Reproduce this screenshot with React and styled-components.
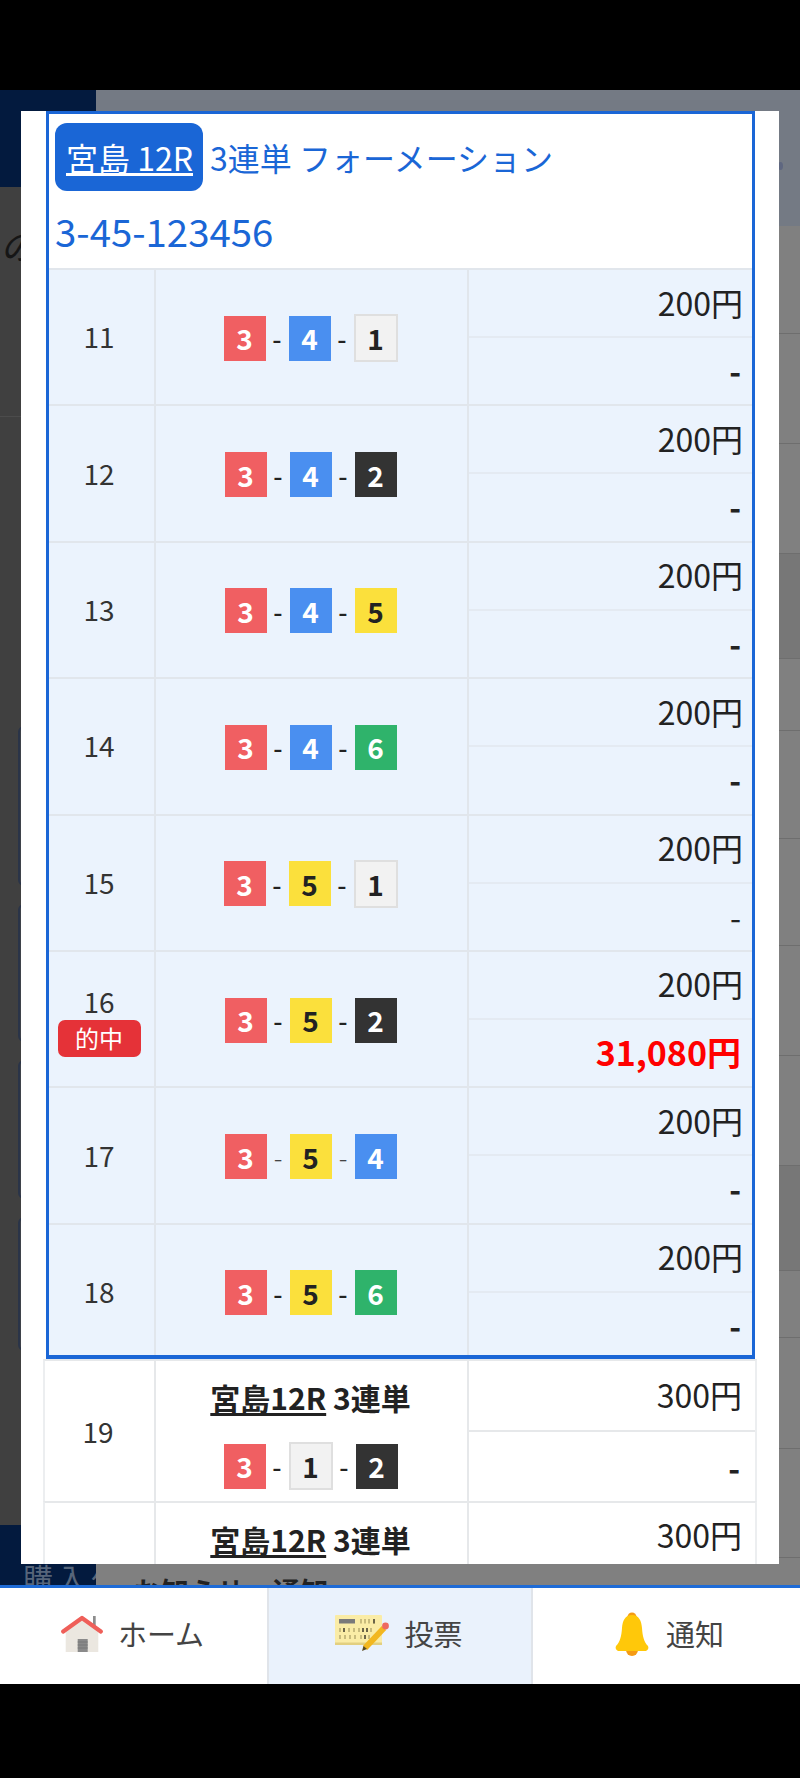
import React from 'react'
import styled, { createGlobalStyle } from 'styled-components'

const GlobalStyle = createGlobalStyle`
  html, body { margin: 0; padding: 0; background: #000; }
  * { box-sizing: border-box; }
  body { font-family: "Noto Sans CJK JP", "Noto Sans", sans-serif; }
`

const Page = styled.div`
  width: 800px;
  height: 1778px;
  background: #000;
  display: flex;
  flex-direction: column;
  overflow: hidden;
  padding-top: 90px;
`

const Screen = styled.div`
  position: relative;
  height: 1495px;
  overflow: hidden;
`

/* dimmed page behind the modal */
const BackPage = styled.div`
  height: 100%;
  display: grid;
  grid-template-columns: 96px 1fr;
`

const LeftCol = styled.div`
  display: flex;
  flex-direction: column;
  overflow: hidden;
`

const NavyHead = styled.div`
  height: 97px;
  flex: none;
  background: #031a3e;
`

const DarkPanel = styled.div`
  flex: 1;
  background: #404040;
  display: flex;
  flex-direction: column;
  overflow: hidden;
`

const Kana = styled.div`
  margin-top: 37px;
  height: 40px;
  font-size: 36px;
  line-height: 40px;
  font-style: italic;
  color: #161616;
`

const Rule = styled.div`
  margin-top: 152px;
  height: 1px;
  flex: none;
  background: #4c4c4c;
`

const Cards = styled.div`
  margin-top: 309px;
  display: flex;
  flex-direction: column;
  gap: 18px;
`

const Card = styled.div`
  margin-left: 18px;
  width: 78px;
  height: ${p => p.$h}px;
  background: #3e424a;
  border: 2px solid #2a3448;
  border-radius: 6px;
`

const NavyFoot = styled.div`
  height: 60px;
  flex: none;
  background: #031a3e;
  color: #56657a;
  font-size: 30px;
  line-height: 36px;
  letter-spacing: 4px;
  padding: 34px 0 0 23px;
  white-space: nowrap;
  overflow: hidden;
`

const RightCol = styled.div`
  display: flex;
  flex-direction: column;
  background: #808080;
  overflow: hidden;
`

const SlateHead = styled.div`
  height: 136px;
  flex: none;
  background: #747a84;
  display: flex;
  align-items: center;
  justify-content: flex-end;
  padding: 16px 17px 0 0;
`

const Dot = styled.span`
  width: 5px;
  height: 8px;
  border-radius: 50%;
  background: #5f6780;
`

const BackList = styled.div`
  flex: 1;
`

const BackRow = styled.div`
  height: ${p => p.$h}px;
  background: ${p => (p.$band ? '#777' : '#808080')};
  border-bottom: 1px solid #6e6e6e;
`

const BackTitle = styled.div`
  height: 21px;
  flex: none;
  padding: 7px 0 0 37px;
  font-size: 28px;
  line-height: 40px;
  font-weight: 700;
  color: #222;
  white-space: nowrap;
  overflow: hidden;
`

/* modal */
const Modal = styled.div`
  position: absolute;
  left: 21px;
  top: 21px;
  width: 758px;
  height: 1453px;
  background: #fff;
  padding: 0 22px;
  overflow: hidden;
`

const Frame = styled.div`
  margin: 0 2px 0 3px;
  height: 1248px;
  border: 3px solid #1a66d6;
  border-bottom-width: 4px;
  overflow: hidden;
`

const Header = styled.div`
  height: 154px;
  padding: 9px 0 0 6px;
  color: #1a66d6;
  font-size: 32px;
`

const TitleLine = styled.div`
  display: flex;
  align-items: center;
  height: 68px;
`

const VenueBadge = styled.a`
  display: flex;
  align-items: center;
  height: 68px;
  padding: 0 10px 0 11px;
  background: #1a66d6;
  border-radius: 12px;
  color: #fff;
  text-decoration: underline;
  margin-right: 7px;
`

const FormationLine = styled.div`
  margin-top: 15px;
  height: 48px;
  line-height: 48px;
  font-size: 38.4px;
`

const Row = styled.div`
  display: grid;
  grid-template-columns: ${p => (p.$framed ? '107px' : '111px')} 313px 1fr;
  height: ${p => p.$h}px;
  background: ${p => (p.$framed ? '#ebf3fd' : '#fff')};
  border-top: 2px solid ${p => (p.$framed ? '#e1e6ec' : '#e6e8ea')};
  border-left: ${p => (p.$framed ? '0' : '2px solid #eceef0')};
  border-right: ${p => (p.$framed ? '0' : '2px solid #eceef0')};
  color: #222;
`

const LabelCell = styled.div`
  display: flex;
  flex-direction: column;
  align-items: center;
  justify-content: center;
  padding: ${p => (p.$hit ? '2px' : '0')} ${p => (p.$framed ? '5px' : '3px')} ${p => (p.$hit ? '0' : '2px')} 0;
  border-right: 2px solid ${p => (p.$framed ? '#e1e6ec' : '#e6e8ea')};
  font-size: 28px;
  line-height: 34px;
  color: #333;
`

const HitBadge = styled.span`
  width: 83px;
  height: 37px;
  margin-top: 2px;
  border-radius: 7px;
  background: #e53238;
  color: #fff;
  font-size: 24px;
  line-height: 36px;
  text-align: center;
`

const BetCell = styled.div`
  display: flex;
  flex-direction: column;
  align-items: center;
  justify-content: ${p => (p.$titled ? 'flex-start' : 'center')};
  padding: ${p => (p.$titled ? '18px' : '2px')} 2px 0 0;
  border-right: 2px solid ${p => (p.$framed ? '#e1e6ec' : '#e6e8ea')};
`

const BetTitle = styled.div`
  height: 36px;
  font-size: 30px;
  line-height: 36px;
  font-weight: 700;
  white-space: nowrap;
  color: #222;
  margin-bottom: 27px;

  u { text-underline-offset: 3px; }
`

const Combo = styled.div`
  display: flex;
  align-items: center;
  height: 48px;
`

const Boat = styled.span`
  width: ${p => (p.$n === 1 ? '44px' : '42px')};
  height: ${p => (p.$n === 1 ? '48px' : '45px')};
  display: flex;
  align-items: center;
  justify-content: center;
  font-size: 28px;
  line-height: 1;
  font-weight: 700;
  background: ${p => ({ 1: '#f2f2f2', 2: '#333', 3: '#f05f62', 4: '#4a8ff0', 5: '#fbe03c', 6: '#2fb36b' }[p.$n])};
  color: ${p => (p.$n === 1 || p.$n === 5 ? '#222' : '#fff')};
  border: ${p => (p.$n === 1 ? '2px solid #dfdfdf' : '0')};
`

const Dash = styled.span`
  width: 23px;
  text-align: center;
  font-size: 26px;
  line-height: 40px;
  font-weight: ${p => (p.$thin ? 300 : 500)};
  color: ${p => (p.$thin ? '#444' : '#222')};
`

const AmountCell = styled.div`
  display: flex;
  flex-direction: column;
`

const Amount = styled.div`
  height: ${p => p.$h}px;
  flex: none;
  display: flex;
  align-items: center;
  justify-content: flex-end;
  padding-right: ${p => (p.$framed ? 9 : 13) + (p.$line ? 0 : 2)}px;
  padding-bottom: ${p => (p.$line ? '3px' : '0')};
  font-size: ${p => (p.$win ? '34px' : '32px')};
  font-weight: ${p => (p.$win || p.$dash ? 700 : 400)};
  color: ${p => (p.$win ? '#f00' : '#222')};
  border-bottom: ${p => (p.$line ? `2px solid ${p.$framed ? '#e4eaf2' : '#e6e8ea'}` : '0')};
`

/* bottom nav */
const BottomNav = styled.nav`
  height: 99px;
  flex: none;
  background: #fff;
  border-top: 3px solid #1e6bd6;
  display: grid;
  grid-template-columns: 267px 266px 267px;
`

const NavItem = styled.a`
  display: flex;
  align-items: center;
  justify-content: center;
  gap: ${p => p.$gap}px;
  padding: 0 ${p => p.$pr || 0}px 5px ${p => p.$pl || 0}px;
  color: #444;
  background: ${p => (p.$active ? '#eaf2fc' : '#fff')};
  border-left: ${p => (p.$active ? '2px solid #e0e4ea' : '0')};
  border-right: ${p => (p.$active ? '2px solid #e0e4ea' : '0')};
`

const NavLabel = styled.span`
  font-size: 29px;
  margin-bottom: 2px;
`

const HouseIcon = () => (
  <svg width="42" height="38" viewBox="0 0 42 38">
    <rect x="32" y="1" width="2.7" height="10" fill="#8d8d8d" />
    <path d="M4.7 15 21 3 37.3 15V37H4.7Z" fill="#ebe7e0" />
    <path d="M2.2 16.500 21 3 39.800 16.500" fill="none" stroke="#ef5f59" strokeWidth="4.200" strokeLinecap="round" strokeLinejoin="round" />
    <rect x="16.7" y="24" width="10" height="13" fill="#8a8a8a" />
    <path d="M16.7 27h10M16.7 30h10M16.7 33h10" stroke="#777" strokeWidth="1" />
  </svg>
)

const TicketIcon = () => (
  <svg width="56" height="37" viewBox="0 0 56 37">
    <rect x="0" y="0" width="47" height="30" rx="1" fill="#faeca6" />
    <rect x="0" y="27.500" width="47" height="2.500" fill="#e2cf80" />
    <rect x="4" y="4" width="16" height="4.500" fill="#7a7a7a" />
    <path d="M26 4v4.500M30 4v4.500M34 4v4.500M39 4v4.500M5 13v4M9 13v4M14 13v4M19 13v4M24 13v4M28 13v4M32 13v4M36 13v4M5 20v4M10 20v4M15 20v4M20 20v4M26 20v4M30 20v4M34 20v4" stroke="#a89c62" strokeWidth="1.200" />
    <path d="M9 13v4M28 13v4M32 13v4M30 20v4M39 4v4.500" stroke="#4d4a38" strokeWidth="1.500" />
    <path d="M30 33 49 13" stroke="#f2b720" strokeWidth="6" />
    <path d="M27 36 28.500 31 32 34Z" fill="#5a4a20" />
    <circle cx="50.500" cy="11" r="3.400" fill="#ee6a60" />
  </svg>
)

const BellIcon = () => (
  <svg width="34" height="44" viewBox="0 0 34 44">
    <circle cx="17" cy="5" r="4.500" fill="#f59b14" />
    <circle cx="17" cy="38" r="6" fill="#f59b14" />
    <path d="M17 3C24 3 26.500 9 27 16 27.500 24 29 30 33 34 34 36 33 38 31 39H3C1 38 0 36 1 34 5 30 6.500 24 7 16 7.500 9 10 3 17 3Z" fill="#ffc80a" />
  </svg>
)

const bets = [
  { no: 11, combo: [3, 4, 1] },
  { no: 12, combo: [3, 4, 2] },
  { no: 13, combo: [3, 4, 5] },
  { no: 14, combo: [3, 4, 6] },
  { no: 15, combo: [3, 5, 1], thinPayout: true },
  { no: 16, combo: [3, 5, 2], hit: true, payout: '31,080円' },
  { no: 17, combo: [3, 5, 4], thinDash: true },
  { no: 18, combo: [3, 5, 6] },
]

const backRows = [
  { h: 108 }, { h: 110 }, { h: 110 }, { h: 105, band: true }, { h: 72 }, { h: 108 }, { h: 107 },
  { h: 110 }, { h: 110 }, { h: 105, band: true }, { h: 67 }, { h: 111 }, { h: 109 },
]

const ComboView = ({ combo, thin }) => (
  <Combo>
    <Boat $n={combo[0]}>{combo[0]}</Boat>
    <Dash $thin={thin}>-</Dash>
    <Boat $n={combo[1]}>{combo[1]}</Boat>
    <Dash $thin={thin}>-</Dash>
    <Boat $n={combo[2]}>{combo[2]}</Boat>
  </Combo>
)

const App = () => {
  return (
    <Page>
      <GlobalStyle />
      <Screen>
        <BackPage>
          <LeftCol>
            <NavyHead />
            <DarkPanel>
              <Kana>の</Kana>
              <Rule />
              <Cards>
                <Card $h={160} />
                <Card $h={138} />
                <Card $h={139} />
                <Card $h={134} />
              </Cards>
            </DarkPanel>
            <NavyFoot>購入外</NavyFoot>
          </LeftCol>
          <RightCol>
            <SlateHead><Dot /></SlateHead>
            <BackList>
              {backRows.map((r, i) => <BackRow key={i} $h={r.h} $band={r.band} />)}
            </BackList>
            <BackTitle>お知らせ・通知</BackTitle>
          </RightCol>
        </BackPage>

        <Modal>
          <Frame>
            <Header>
              <TitleLine>
                <VenueBadge>宮島 12R</VenueBadge>
                3連単 フォーメーション
              </TitleLine>
              <FormationLine>3-45-123456</FormationLine>
            </Header>
            {bets.map(b => (
              <Row key={b.no} $framed $h={136.4}>
                <LabelCell $framed $hit={b.hit}>
                  {b.no}
                  {b.hit && <HitBadge>的中</HitBadge>}
                </LabelCell>
                <BetCell $framed>
                  <ComboView combo={b.combo} thin={b.thinDash} />
                </BetCell>
                <AmountCell>
                  <Amount $framed $line $h={68}>200円</Amount>
                  {b.payout
                    ? <Amount $framed $win $h={64}>{b.payout}</Amount>
                    : <Amount $framed $dash={!b.thinPayout} $h={64}>-</Amount>}
                </AmountCell>
              </Row>
            ))}
          </Frame>
          <Row $h={142}>
            <LabelCell>19</LabelCell>
            <BetCell $titled>
              <BetTitle><u>宮島12R</u> 3連単</BetTitle>
              <ComboView combo={[3, 1, 2]} />
            </BetCell>
            <AmountCell>
              <Amount $line $h={71}>300円</Amount>
              <Amount $dash $h={70}>-</Amount>
            </AmountCell>
          </Row>
          <Row $h={142}>
            <LabelCell />
            <BetCell $titled>
              <BetTitle><u>宮島12R</u> 3連単</BetTitle>
            </BetCell>
            <AmountCell>
              <Amount $line $h={67}>300円</Amount>
            </AmountCell>
          </Row>
        </Modal>
      </Screen>
      <BottomNav>
        <NavItem $gap={15} $pr={2}><HouseIcon /><NavLabel>ホーム</NavLabel></NavItem>
        <NavItem $active $gap={13} $pr={2}><TicketIcon /><NavLabel>投票</NavLabel></NavItem>
        <NavItem $gap={17} $pl={6}><BellIcon /><NavLabel>通知</NavLabel></NavItem>
      </BottomNav>
    </Page>
  )
}

export default App
